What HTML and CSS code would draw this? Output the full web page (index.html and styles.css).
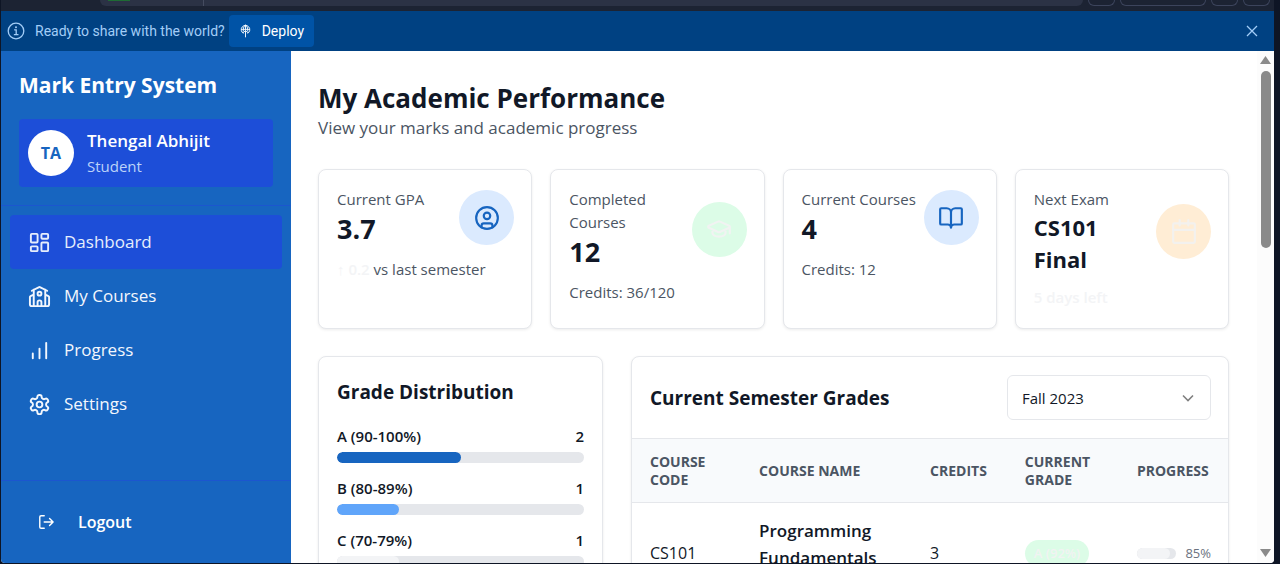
FILE: index.html
```html
<!DOCTYPE html>
<html lang="en">
<head>
<meta charset="utf-8">
<meta name="viewport" content="width=device-width, initial-scale=1">
<title>Mark Entry System</title>
<link rel="stylesheet" href="styles.css">
</head>
<body>
<div class="frame">
  <div class="chrome" aria-hidden="true">
    <div class="address"><span class="badge-run"></span><span class="address-split"></span></div>
    <span class="pill pill-s"></span><span class="pill pill-l"></span><span class="pill pill-s"></span><span class="pill pill-s"></span>
  </div>
  <div class="banner">
    <svg class="info" viewBox="0 0 18 18" fill="none" stroke="currentColor" stroke-width="1.3" stroke-linecap="round"><circle cx="9" cy="9" r="7.8"/><path d="M7.6 7.8h1.6v4.8M7.4 12.7h3.6"/><circle cx="9" cy="5.3" r=".4" fill="currentColor"/></svg>
    <span>Ready to share with the world?</span>
    <button class="deploy" type="button">
      <svg viewBox="0 0 14 14" fill="none" stroke="currentColor" stroke-width="1"><path d="M4.800 9.600A4.600 4.600 0 1 1 9.200 9.600M2.400 5.200h9.200M7 .6v5M4.600 7.500C4.300 3.500 5.600 1.200 7 .6C8.400 1.200 9.700 3.500 9.400 7.500M4.400 9L7 6.400L9.600 9M7 6.400v7.400"/></svg>
      Deploy
    </button>
    <button class="close" type="button" aria-label="Close"><svg viewBox="0 0 12 12" fill="none" stroke="currentColor" stroke-width="1.3"><path d="M1 1l10 10M11 1L1 11"/></svg></button>
  </div>
  <div class="app">
    <aside class="sidebar">
      <div class="side-head">
        <div class="brand">Mark Entry System</div>
        <div class="user">
          <span class="avatar">TA</span>
          <div><div class="user-name">Thengal Abhijit</div><div class="user-role">Student</div></div>
        </div>
      </div>
      <nav class="nav">
        <a class="active" href="#dashboard"><svg viewBox="0 0 24 24"><rect x="3" y="3" width="7" height="9" rx="1"/><rect x="14" y="3" width="7" height="5" rx="1"/><rect x="14" y="12" width="7" height="9" rx="1"/><rect x="3" y="16" width="7" height="5" rx="1"/></svg>Dashboard</a>
        <a href="#courses"><svg viewBox="0 0 24 24"><path d="M14 22v-4a2 2 0 0 0-4 0v4M18 10l3.4 1.7a1 1 0 0 1 .6.9V20a2 2 0 0 1-2 2H4a2 2 0 0 1-2-2v-7.400a1 1 0 0 1 .6-.9L6 10M18 5v17M6 5v17M4 6l7.100-3.600a2 2 0 0 1 1.800 0L20 6"/><circle cx="12" cy="9" r="2"/></svg>My Courses</a>
        <a href="#progress"><svg viewBox="0 0 24 24"><path d="M5 20v-5M12 20V10M19 20V4"/></svg>Progress</a>
        <a href="#settings"><svg viewBox="0 0 24 24"><path d="M12.220 2h-.44a2 2 0 0 0-2 2v.18a2 2 0 0 1-1 1.730l-.43.25a2 2 0 0 1-2 0l-.15-.08a2 2 0 0 0-2.730.73l-.22.38a2 2 0 0 0 .73 2.730l.15.1a2 2 0 0 1 1 1.720v.51a2 2 0 0 1-1 1.740l-.15.09a2 2 0 0 0-.73 2.730l.22.38a2 2 0 0 0 2.730.73l.15-.08a2 2 0 0 1 2 0l.43.25a2 2 0 0 1 1 1.730V20a2 2 0 0 0 2 2h.44a2 2 0 0 0 2-2v-.18a2 2 0 0 1 1-1.730l.43-.25a2 2 0 0 1 2 0l.15.08a2 2 0 0 0 2.730-.73l.22-.39a2 2 0 0 0-.73-2.730l-.15-.08a2 2 0 0 1-1-1.740v-.5a2 2 0 0 1 1-1.740l.15-.09a2 2 0 0 0 .73-2.730l-.22-.38a2 2 0 0 0-2.730-.73l-.15.08a2 2 0 0 1-2 0l-.43-.25a2 2 0 0 1-1-1.730V4a2 2 0 0 0-2-2z"/><circle cx="12" cy="12" r="3"/></svg>Settings</a>
      </nav>
      <div class="side-foot">
        <button class="logout" type="button"><svg viewBox="0 0 18 18"><path d="M7 2H3.500A1.500 1.500 0 0 0 2 3.500v11A1.500 1.500 0 0 0 3.500 16H7M7 9h10M13 5l4 4-4 4"/></svg>Logout</button>
      </div>
    </aside>
    <main class="main">
      <header>
        <h1>My Academic Performance</h1>
        <p class="lead">View your marks and academic progress</p>
      </header>
      <section class="stats">
        <article class="card stat">
          <div class="stat-top"><div><div class="label">Current GPA</div><div class="value">3.7</div></div>
          <span class="disc blue"><svg viewBox="0 0 24 24"><circle cx="12" cy="12" r="10"/><circle cx="12" cy="10" r="3"/><path d="M7 20.660V19a2 2 0 0 1 2-2h6a2 2 0 0 1 2 2v1.660"/></svg></span></div>
          <div class="note"><span class="faint">↑ 0.2</span> vs last semester</div>
        </article>
        <article class="card stat">
          <div class="stat-top"><div><div class="label">Completed Courses</div><div class="value">12</div></div>
          <span class="disc green"><svg viewBox="0 0 24 24"><path d="M21.420 10.920a1 1 0 0 0-.02-1.840L12.830 5.180a2 2 0 0 0-1.660 0L2.600 9.080a1 1 0 0 0 0 1.830l8.570 3.910a2 2 0 0 0 1.660 0zM22 10v6M6 12.500V16a6 3 0 0 0 12 0v-3.500"/></svg></span></div>
          <div class="note">Credits: 36/120</div>
        </article>
        <article class="card stat">
          <div class="stat-top"><div><div class="label">Current Courses</div><div class="value">4</div></div>
          <span class="disc blue"><svg viewBox="0 0 24 24"><path d="M12 7v14M3 18a1 1 0 0 1-1-1V4a1 1 0 0 1 1-1h5a4 4 0 0 1 4 4 4 4 0 0 1 4-4h5a1 1 0 0 1 1 1v13a1 1 0 0 1-1 1h-6a3 3 0 0 0-3 3 3 3 0 0 0-3-3z"/></svg></span></div>
          <div class="note">Credits: 12</div>
        </article>
        <article class="card stat">
          <div class="stat-top"><div><div class="label">Next Exam</div><div class="value exam">CS101<br>Final</div></div>
          <span class="disc orange"><svg viewBox="0 0 24 24"><path d="M8 1v5M16 1v5M2 10h20"/><rect x="2" y="4" width="20" height="18" rx="1"/></svg></span></div>
          <div class="note faint">5 days left</div>
        </article>
      </section>
      <section class="panels">
        <article class="card dist">
          <h2>Grade Distribution</h2>
          <div class="grade"><div class="grade-row"><span>A (90-100%)</span><span>2</span></div><div class="bar"><div class="fill a" style="width:50%"></div></div></div>
          <div class="grade"><div class="grade-row"><span>B (80-89%)</span><span>1</span></div><div class="bar"><div class="fill b" style="width:25%"></div></div></div>
          <div class="grade"><div class="grade-row"><span>C (70-79%)</span><span>1</span></div><div class="bar"><div class="fill c" style="width:25%"></div></div></div>
        </article>
        <article class="card grades">
          <div class="grades-head">
            <h2 id="grades-title">Current Semester Grades</h2>
            <div class="select">
              <select aria-label="Semester"><option>Fall 2023</option></select>
              <svg viewBox="0 0 12 12" fill="none" stroke="currentColor" stroke-width="1.600"><path d="M1 3.500l5 5 5-5"/></svg>
            </div>
          </div>
          <table aria-labelledby="grades-title">
            <colgroup><col class="c-code"><col class="c-name"><col class="c-cred"><col class="c-grade"><col class="c-prog"></colgroup>
            <thead><tr><th>COURSE CODE</th><th>COURSE NAME</th><th>CREDITS</th><th>CURRENT GRADE</th><th>PROGRESS</th></tr></thead>
            <tbody><tr><td>CS101</td><td class="name">Programming Fundamentals</td><td>3</td><td><span class="tag">A (92%)</span></td><td><div class="prog"><div class="mini"><div class="fill c" style="width:85%"></div></div><span>85%</span></div></td></tr></tbody>
          </table>
        </article>
      </section>
    </main>
    <div class="scrollbar" aria-hidden="true"><span class="up"></span><span class="thumb"></span><span class="down"></span></div>
  </div>
</div>
</body>
</html>
```
FILE: styles.css
```css
* { box-sizing: border-box; }
body {
  margin: 0;
  height: 100vh;
  overflow: hidden;
  background: #0e1525;
  color: #111827;
  font: 16px/24px "Open Sans", "Noto Sans", sans-serif;
}
h1, h2, p { margin: 0; }
button, select { font: inherit; color: inherit; border: 0; background: none; padding: 0; }
svg { display: block; flex: none; }

.frame { display: flex; flex-direction: column; height: 100vh; padding: 0 6px 1px 1px; background: #0e1525; }

.chrome { display: flex; gap: 5px; height: 11px; padding: 0 4px 5px 99px; background: #1c2333; flex: none; }
.address { flex: 1; display: flex; background: #2b3245; border-radius: 0 0 6px 6px; padding-left: 8px; }
.badge-run { width: 22px; height: 1px; background: #1e6b34; }
.address-split { width: 1px; margin-left: 73px; background: #454c60; }
.pill { border: 1px solid #3c445c; border-top: 0; border-radius: 0 0 8px 8px; }
.pill-s { width: 27px; }
.pill-l { width: 86px; }

.banner {
  display: flex; align-items: center; height: 40px; flex: none;
  padding: 0 14px 0 6px; background: #004182; color: #a3cdf7;
  font: 14px/20px "Roboto", sans-serif;
}
.info { width: 18px; height: 18px; margin-right: 10px; }
.deploy {
  display: flex; align-items: center; gap: 10px; height: 32px; margin-left: 4px;
  padding: 0 10px; border-radius: 4px; background: #0053a6; color: #fff;
}
.deploy svg { width: 13px; height: 14px; }
.close { margin-left: auto; padding: 2px; }
.close svg { width: 12px; height: 12px; }

.app { display: flex; flex: 1; min-height: 0; background: #fff; border-radius: 0 0 4px 4px; overflow: hidden; }

.sidebar { display: flex; flex-direction: column; width: 290px; flex: none; background: #1765c0; color: #fff; }
.side-head { padding: 18px 18px 18px; border-bottom: 1px solid #1c56cf; }
.brand { font-size: 21px; line-height: 32px; font-weight: 700; }
.user { display: flex; align-items: center; gap: 13px; margin-top: 18px; padding: 9px; background: #1d4ed8; border-radius: 4px; }
.avatar { display: grid; place-items: center; width: 46px; height: 46px; border-radius: 50%; background: #fff; color: #1765c0; font-weight: 700; }
.user-name { font-size: 17px; line-height: 26px; font-weight: 600; }
.user-role { font-size: 15px; line-height: 24px; color: #bcd3f8; }
.nav { display: flex; flex-direction: column; flex: 1; padding: 9px 9px; }
.nav a { display: flex; align-items: center; gap: 13px; height: 54px; padding: 0 18px; border-radius: 4px; color: #f3f7fd; font-size: 17px; text-decoration: none; }
.nav a.active { background: #1d4ed8; color: #e6eefc; }
.nav svg, .logout svg { width: 23px; height: 23px; fill: none; stroke: currentColor; stroke-width: 2; stroke-linecap: round; stroke-linejoin: round; }
.side-foot { border-top: 1px solid #1c56cf; padding: 18px; }
.logout { display: flex; align-items: center; gap: 23px; height: 46px; padding: 0 18px; font-size: 16px; font-weight: 600; }
.logout svg { width: 18px; height: 16px; stroke-width: 1.6; }

.main { flex: 1; min-width: 0; overflow: hidden; padding: 28px 28px 0 27px; }
h1 { font-size: 26px; line-height: 38px; font-weight: 700; }
.lead { font-size: 17px; line-height: 22px; color: #4b5563; }
.card { background: #fff; border: 1px solid #e5e7eb; border-radius: 8px; box-shadow: 0 1px 3px #00000014; }

.stats { display: grid; grid-template-columns: repeat(4, 1fr); gap: 18px; margin-top: 30px; }
.stat { padding: 18px 17px 19px 18px; }
.stat-top { display: flex; align-items: center; justify-content: space-between; }
.label, .note { font-size: 15px; line-height: 23px; color: #4b5563; }
.value { font-size: 27px; line-height: 36px; font-weight: 700; }
.value.exam { font-size: 22px; line-height: 32px; }
.note { margin-top: 11px; }
.faint, .note.faint { color: #f3f4f6; font-weight: 600; }
.disc { display: grid; place-items: center; flex: none; width: 55px; height: 55px; border-radius: 50%; }
.disc svg { width: 26px; height: 26px; fill: none; stroke: currentColor; stroke-width: 2; stroke-linecap: round; stroke-linejoin: round; }
.blue { background: #dbeafe; color: #1765c0; }
.green { background: #dcfce7; color: #f1f3f2; }
.orange { background: #ffedd5; color: #f3f1ee; }

.panels { display: grid; grid-template-columns: repeat(3, 1fr); gap: 28px; margin-top: 27px; }
h2 { font-size: 19px; line-height: 32px; font-weight: 700; }
.dist { padding: 19px 18px; }
.dist h2 { margin-bottom: 17px; }
.grade { margin-bottom: 14px; }
.grade-row { display: flex; justify-content: space-between; font-size: 15px; line-height: 22px; font-weight: 600; padding-bottom: 5px; }
.bar { height: 11px; border-radius: 6px; background: #e5e7eb; overflow: hidden; }
.fill { height: 100%; border-radius: 6px; }
.a { background: #1765c0; }
.b { background: #60a5fa; }
.c { background: #f3f4f6; }

.grades { grid-column: span 2; overflow: hidden; }
.grades-head { display: flex; align-items: center; justify-content: space-between; padding: 18px 17px 18px 18px; }
.select { display: flex; align-items: center; position: relative; width: 204px; }
.select select { appearance: none; width: 100%; height: 45px; padding: 0 14px; border: 1px solid #e5e7eb; border-radius: 6px; background: #fff; font-size: 15px; }
.select svg { position: absolute; right: 17px; width: 12px; height: 12px; color: #808080; pointer-events: none; }
table { width: 100%; border-collapse: collapse; table-layout: fixed; }
.c-code { width: 18.3%; }
.c-name { width: 28.7%; }
.c-cred { width: 15.9%; }
.c-grade { width: 18.8%; }
.c-prog { width: 18.3%; }
th { height: 64px; padding: 0 14px 0 18px; background: #f8fafc; border-top: 1px solid #e5e7eb; border-bottom: 1px solid #e5e7eb; color: #4b5563; font-size: 14px; line-height: 18px; font-weight: 700; text-align: left; }
td { height: 101px; padding: 0 17px 0 18px; font-size: 16px; line-height: 27px; }
td.name { padding-bottom: 18px; font-size: 17px; font-weight: 600; }
.tag { display: inline-block; padding: 0 9px; border-radius: 14px; background: #dcfce7; color: #f1f3f2; font-size: 13px; font-weight: 600; }
.prog { display: flex; align-items: center; gap: 9px; font-size: 13px; color: #6b7280; }
.mini { flex: 1; height: 11px; border-radius: 6px; background: #e5e7eb; overflow: hidden; }

.scrollbar { display: flex; flex-direction: column; align-items: center; width: 17px; padding: 5px 0 6px; flex: none; background: #fcfcfc; }
.up, .down { width: 11px; height: 8px; background: #8a8a8a; flex: none; }
.up { clip-path: polygon(50% 0, 100% 100%, 0 100%); }
.down { margin-top: auto; clip-path: polygon(0 0, 100% 0, 50% 100%); }
.thumb { width: 10px; height: 177px; margin-top: 7px; border-radius: 5px; background: #8a8a8a; }
```
